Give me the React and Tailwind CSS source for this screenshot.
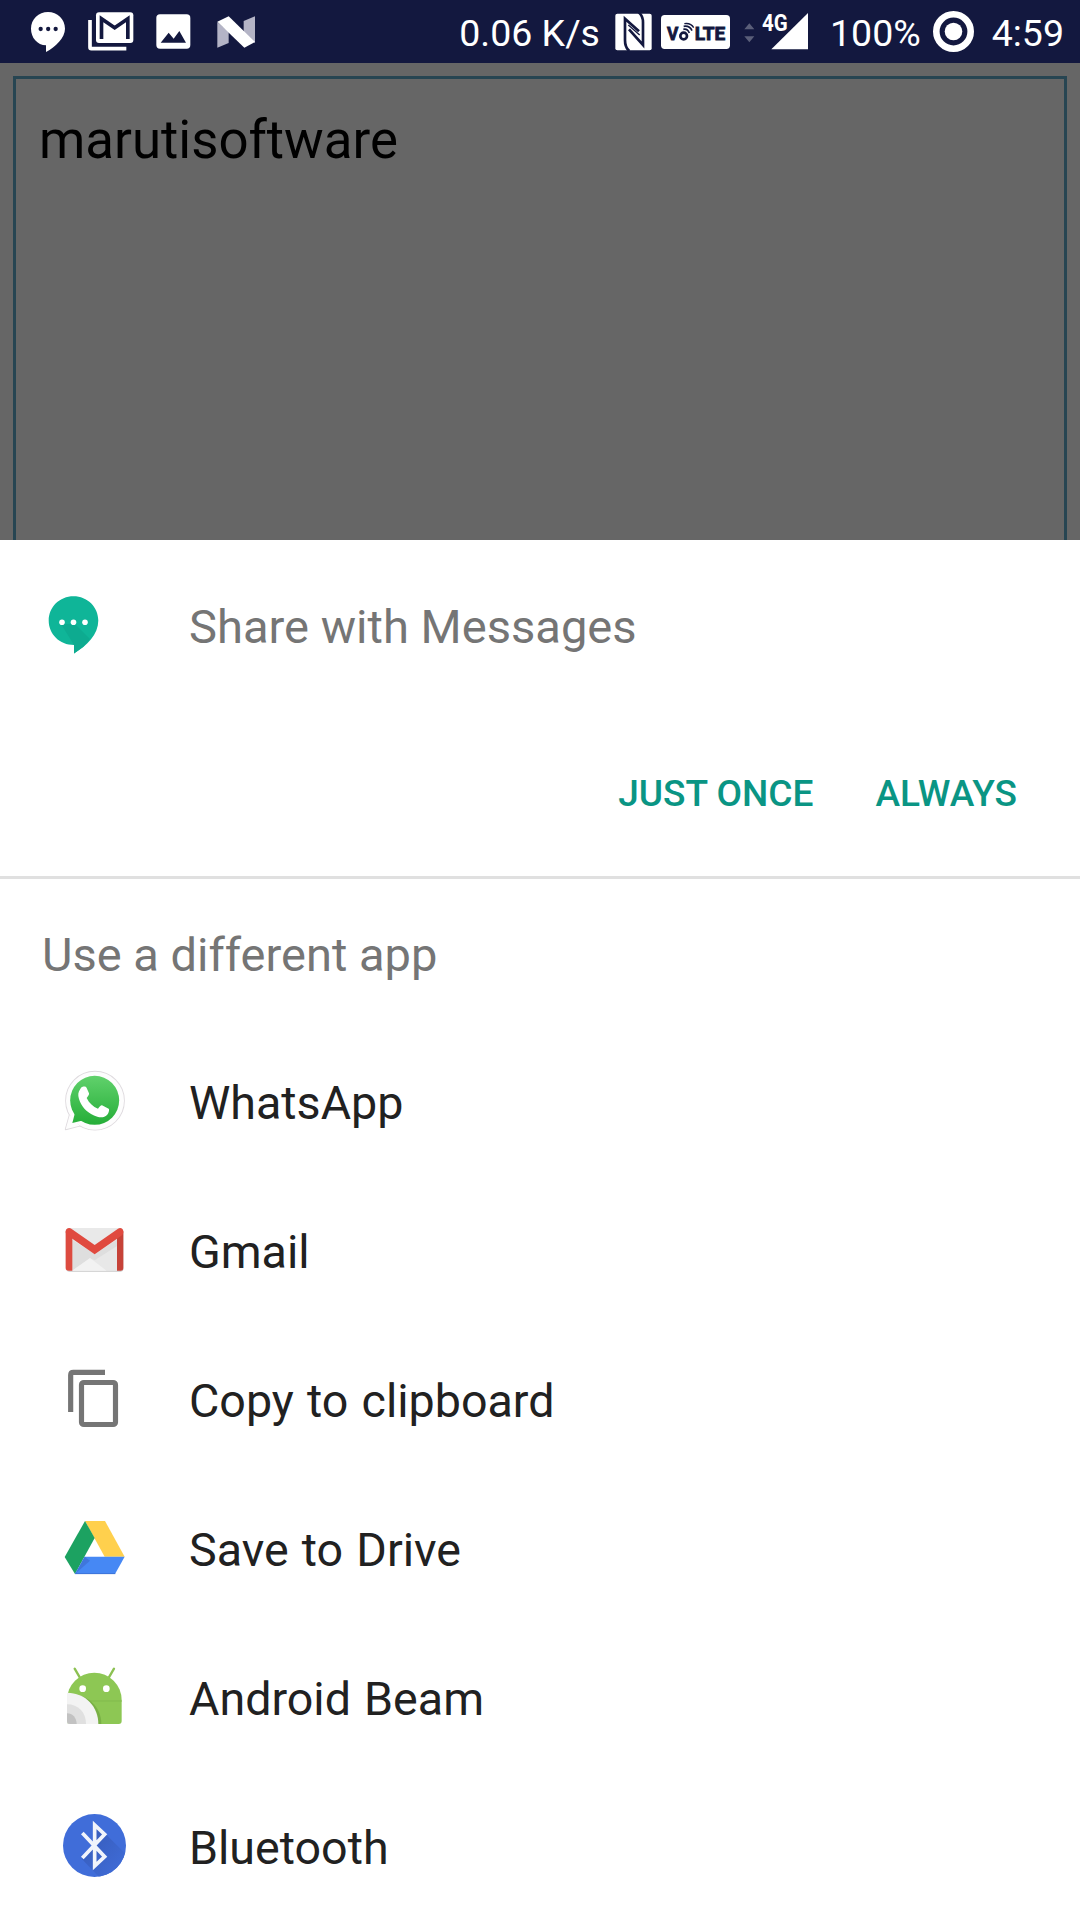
const MessageStatusIcon = () => (
  <svg className="w-[34px] h-10" viewBox="93 36 102 120">
    <path
      fill="#fff"
      d="M144 36c28 0 51 22 51 50 0 27-28 54-57 70v-20c-26-1-45-23-45-50 0-28 23-50 51-50z"
    />
    <g fill="#13183f">
      <circle cx="122" cy="87" r="6.5" />
      <circle cx="144.500" cy="87" r="6.500" />
      <circle cx="167" cy="87" r="6.500" />
    </g>
  </svg>
);

const MailStatusIcon = () => (
  <svg className="w-[46px] h-10" viewBox="263 36 138 120">
    <rect x="287" y="37" width="112" height="92" rx="9" fill="#fff" />
    <path
      d="M269 60v82q0 4 4 4h105"
      fill="none"
      stroke="#fff"
      strokeWidth="11"
    />
    <path
      d="M303.500 117V56l39.500 27 39.500-27v61"
      fill="none"
      stroke="#13183f"
      strokeWidth="11"
    />
  </svg>
);

const ImageStatusIcon = () => (
  <svg className="w-[35px] h-[35px]" viewBox="469 43 105 105">
    <rect x="470" y="44" width="102" height="103" rx="11" fill="#fff" />
    <path d="M483 129l24-30 15 18 17-23 20 35z" fill="#13183f" />
  </svg>
);

const NougatIcon = () => (
  <svg className="w-[38px] h-8" viewBox="652 46 114 96">
    <path d="M653 64l34 30v33l-34 14z" fill="#b4b4c6" />
    <path d="M732 61l34-14v80l-34-30z" fill="#b4b4c6" />
    <path d="M653 63l34-16 79 77-32 17z" fill="#fff" />
  </svg>
);

const NfcIcon = () => (
  <svg className="w-[37px] h-[38px]" viewBox="526 39 111 114">
    <rect x="527" y="41" width="109" height="110" rx="6" fill="#fff" />
    <g fill="none" stroke="#13183f" strokeWidth="8">
      <path d="M569 153q-13-10-13-32V56l42 38" />
      <path d="M568 88l42 47V67q0-19-13-30" />
      <path d="M566 75l34 30" strokeWidth="4" />
    </g>
  </svg>
);

const VolteIcon = () => (
  <svg className="w-[69px] h-[34px]" viewBox="663 42 207 102">
    <rect x="663" y="42" width="207" height="102" rx="11" fill="#fff" />
    <g
      fill="#13183f"
      stroke="#13183f"
      strokeWidth="2.500"
      className="font-[Roboto] font-bold"
    >
      <text x="681" y="117" fontSize="54" textLength="34" lengthAdjust="spacingAndGlyphs">
        V
      </text>
      <text x="764" y="117" fontSize="54" textLength="92" lengthAdjust="spacingAndGlyphs">
        LTE
      </text>
    </g>
    <g fill="none" stroke="#13183f">
      <circle cx="731" cy="105" r="10" strokeWidth="8" />
      <path d="M730 85q12-3 18 11" strokeWidth="5" />
      <path d="M731 76q18-3 25 13" strokeWidth="5" />
      <path d="M733 68q20-3 28 12" strokeWidth="4" />
    </g>
  </svg>
);

const DataArrowsIcon = () => (
  <svg className="w-[11px] h-5" viewBox="14 68 33 60">
    <path d="M15 87l15-18 15 18zM15 108h30l-15 18z" fill="#5a5e79" />
  </svg>
);

const SignalIcon = () => (
  <svg className="w-[47px] h-[37px] overflow-visible" viewBox="67 36 141 111">
    <path d="M95 145L205 36v109z" fill="#fff" />
    <text
      x="67"
      y="89"
      fontSize="69"
      textLength="77"
      lengthAdjust="spacingAndGlyphs"
      fill="#fff"
      stroke="#13183f"
      strokeWidth="10"
      paintOrder="stroke"
      className="font-[Roboto] font-bold"
    >
      4G
    </text>
  </svg>
);

const BatteryIcon = () => (
  <svg className="w-[41px] h-[41px]" viewBox="0 0 41 41">
    <circle cx="20.500" cy="20.500" r="17.200" fill="none" stroke="#fff" strokeWidth="6.600" />
    <circle cx="20.500" cy="20.500" r="8.800" fill="#fff" />
  </svg>
);

const MessagesIcon = () => (
  <svg className="w-[63px] h-[63px]" viewBox="0 0 63 63">
    <path
      d="M31.500 3.200C45.500 3.200 56.300 14 56.300 27.500c0 14-11.300 25-24.300 33V52C17.500 52 6.700 41 6.700 27.500c0-13.500 10.800-24.300 24.800-24.300z"
      fill="#0fb598"
    />
    <path d="M19 31l13 21v8.500l9-6.500 7-8L33 31z" fill="#0dab90" />
    <g fill="#fff">
      <circle cx="20" cy="29.200" r="2.800" />
      <circle cx="31.500" cy="29.200" r="2.800" />
      <circle cx="43" cy="29.200" r="2.800" />
    </g>
  </svg>
);

const WhatsAppIcon = () => (
  <svg className="w-[63px] h-[63px]" viewBox="99 446 189 189">
    <defs>
      <linearGradient id="wa" gradientUnits="userSpaceOnUse" x1="0" y1="466" x2="0" y2="613">
        <stop offset="0" stopColor="#61d16c" />
        <stop offset="1" stopColor="#25ae38" />
      </linearGradient>
    </defs>
    <g fill="#fdfdfd" stroke="#dedade" strokeWidth="5" strokeLinejoin="round">
      <circle cx="195" cy="541" r="87" />
      <path d="M107 627l12-43 30 32z" />
    </g>
    <g fill="#fdfdfd">
      <circle cx="195" cy="541" r="87" />
      <path d="M107 627l12-43 30 32z" />
    </g>
    <g fill="url(#wa)">
      <circle cx="194" cy="540" r="73.500" />
      <path d="M127 608l10-38 30 28z" />
    </g>
    <path
      d="M158 499c5-1 10-1 12 4l7 16c1 4-2 8-7 14 8 16 19 26 34 32 5-6 9-11 12-10l20 10c3 2 0 14-5 19-7 7-18 9-29 5-28-9-44-26-52-45-5-12-7-22-3-31 3-6 6-13 11-14z"
      fill="#fff"
    />
  </svg>
);

const GmailIcon = () => (
  <svg className="w-[63px] h-[63px]" viewBox="69 54 189 189">
    <rect x="79" y="87" width="171" height="128" rx="9" fill="#c9c9c9" />
    <rect x="77" y="84" width="173" height="128" rx="9" fill="#e9e9e9" />
    <path d="M96 119l68 43 67-43v93H96z" fill="#dedede" />
    <path d="M96 212l54-37 14 6 67-43v74z" fill="#e8e8e8" />
    <path d="M96 212l54-38 50 38z" fill="#f2f2f2" />
    <path d="M77 94h20v118H86q-9 0-9-8z" fill="#dd4b40" />
    <path d="M231 94h19v110q0 8-8 8h-11z" fill="#c64238" />
    <path
      d="M77 95c0-10 10-13 17-9l70 49 70-49c7-4 16-1 16 9 0 5-2 9-6 12l-80 56-80-56c-4-3-7-7-7-12z"
      fill="#e04a3f"
    />
  </svg>
);

const CopyIcon = () => (
  <svg className="w-[63px] h-[63px]" viewBox="69 51 189 189">
    <g fill="none" stroke="#757575" strokeWidth="15.500">
      <path d="M92 186V75q0-8 8-8h95" />
      <rect x="124.500" y="97.500" width="102" height="126" rx="7" />
    </g>
  </svg>
);

const DriveIcon = () => (
  <svg className="w-[63px] h-[63px]" viewBox="69 48 189 189">
    <path d="M135 63h60l59 107h-60z" fill="#ffd04d" />
    <path d="M74 171l61-108 29 51-59 108z" fill="#1ca261" />
    <path d="M134 170h120l-29 52H105z" fill="#4688f4" />
    <path d="M134 170l-29 52 45-40z" fill="#3f76dc" />
    <path d="M105 221h121" stroke="#3668c8" strokeWidth="2" />
  </svg>
);

const BeamIcon = () => (
  <svg className="w-[63px] h-[63px]" viewBox="69 45 189 189">
    <path
      d="M104 56l17 29M222 56l-17 29"
      stroke="#8cc152"
      strokeWidth="7"
      strokeLinecap="round"
    />
    <path d="M81 150a82 82 0 0 1 164 0v63q0 9-9 9H90q-9 0-9-9z" fill="#8dc754" />
    <path d="M81 153h165" stroke="#7fb84a" strokeWidth="2.500" />
    <path d="M81 130c60 0 103 40 103 92H90q-9 0-9-9z" fill="#79b045" />
    <path d="M81 128c56 0 94 42 94 94H90q-9 0-9-9z" fill="#f3f3f3" />
    <path d="M81 163c34 0 57 24 57 59H90q-9 0-9-9z" fill="#e0e0e0" />
    <path d="M81 190c17 0 29 14 29 32H90q-9 0-9-9z" fill="#c2c2c2" />
    <g fill="#fff">
      <circle cx="128" cy="116" r="10" />
      <circle cx="199" cy="116" r="10" />
    </g>
  </svg>
);

const BluetoothIcon = () => (
  <svg className="w-[63px] h-[63px]" viewBox="69 42 189 189">
    <defs>
      <clipPath id="bt">
        <circle cx="163.500" cy="136.500" r="94.500" />
      </clipPath>
      <linearGradient id="btShade" x1="0" y1="0" x2="1" y2="1">
        <stop offset="0" stopColor="#3559b5" />
        <stop offset="0.800" stopColor="#3f6bd6" />
      </linearGradient>
    </defs>
    <g clipPath="url(#bt)">
      <rect x="69" y="42" width="189" height="189" fill="#406dd9" />
      <path d="M162 68l38 37 70 70v70H190l-65-69 37-36z" fill="url(#btShade)" />
    </g>
    <path
      d="M127 99l67 71-30 28V75l30 28-67 71"
      fill="none"
      stroke="#f1f4fb"
      strokeWidth="11"
    />
  </svg>
);

const apps = [
  { name: "WhatsApp", Icon: WhatsAppIcon },
  { name: "Gmail", Icon: GmailIcon },
  { name: "Copy to clipboard", Icon: CopyIcon },
  { name: "Save to Drive", Icon: DriveIcon },
  { name: "Android Beam", Icon: BeamIcon },
  { name: "Bluetooth", Icon: BluetoothIcon },
];

const StatusBar = () => (
  <header className="flex h-[63px] shrink-0 items-center justify-between bg-[#13183f] pl-[31px] pr-[16px] text-[37.5px] leading-none text-white">
    <div className="flex items-center">
      <MessageStatusIcon />
      <div className="ml-[23px]">
        <MailStatusIcon />
      </div>
      <div className="ml-[22px]">
        <ImageStatusIcon />
      </div>
      <div className="ml-[26px]">
        <NougatIcon />
      </div>
    </div>
    <div className="flex items-center">
      <span className="pt-[5px]">0.06 K/s</span>
      <div className="ml-[15px]">
        <NfcIcon />
      </div>
      <div className="ml-[9px]">
        <VolteIcon />
      </div>
      <div className="ml-[14px] pt-[2px]">
        <DataArrowsIcon />
      </div>
      <div className="ml-[7px]">
        <SignalIcon />
      </div>
      <span className="ml-[21px] pt-[5px]">100%</span>
      <div className="ml-[12px]">
        <BatteryIcon />
      </div>
      <span className="ml-[18px] pt-[5px]">4:59</span>
    </div>
  </header>
);

const ShareSheet = () => (
  <section className="flex-1 bg-white">
    <div className="flex h-[336px] flex-col border-b-3 border-[#e0e0e0] box-content">
      <div className="flex items-center pl-[42px] pt-[53px]">
        <MessagesIcon />
        <span className="ml-[84px] pt-[4px] text-[47.1px] leading-none text-[#757575]">
          Share with Messages
        </span>
      </div>
      <div className="mt-[108px] flex justify-end gap-[62px] pr-[63px] text-[37.1px] font-medium leading-[60px] text-[#0a9584]">
        <button>JUST ONCE</button>
        <button>ALWAYS</button>
      </div>
    </div>
    <h2 className="flex h-[147px] items-center pl-[42px] pt-[3px] text-[47px] leading-none text-[#757575]">
      Use a different app
    </h2>
    <ul>
      {apps.map(({ name, Icon }) => (
        <li key={name} className="flex h-[149px] items-center pl-[63px]">
          <Icon />
          <span className="ml-[63px] pt-[6px] text-[46.6px] leading-none text-[#212121] [word-spacing:1.6px]">
            {name}
          </span>
        </li>
      ))}
    </ul>
  </section>
);

export default function App() {
  return (
    <div className="flex h-[1920px] w-[1080px] flex-col overflow-hidden bg-[#666] font-[Roboto,sans-serif]">
      <StatusBar />
      <main className="h-[477px] shrink-0 px-[13px] pt-[13px]">
        <div className="h-full border-3 border-b-0 border-[#274552] px-[23px] pt-[30px] text-[52.8px] leading-[62px] text-black">
          marutisoftware
        </div>
      </main>
      <ShareSheet />
    </div>
  );
}
